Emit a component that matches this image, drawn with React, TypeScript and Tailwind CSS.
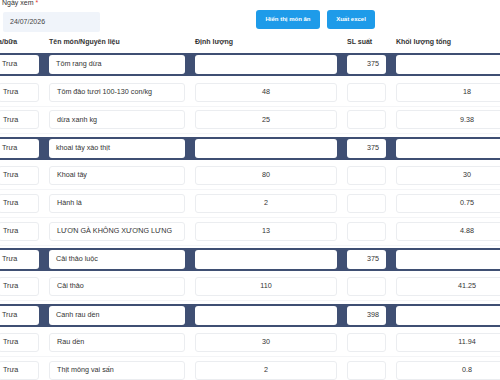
import React from "react";

type Row = { dark?: boolean; name: string; dl?: string; sl?: string; kl?: string };

const rows: Row[] = [
  { dark: true, name: "Tôm rang dừa", sl: "375" },
  { name: "Tôm đảo tươi 100-130 con/kg", dl: "48", kl: "18" },
  { name: "dừa xanh kg", dl: "25", kl: "9.38" },
  { dark: true, name: "khoai tây xào thịt", sl: "375" },
  { name: "Khoai tây", dl: "80", kl: "30" },
  { name: "Hành lá", dl: "2", kl: "0.75" },
  { name: "LƯƠN GÀ KHÔNG XƯƠNG LƯNG", dl: "13", kl: "4.88" },
  { dark: true, name: "Cải thảo luộc", sl: "375" },
  { name: "Cải thảo", dl: "110", kl: "41.25" },
  { dark: true, name: "Canh rau dền", sl: "398" },
  { name: "Rau dền", dl: "30", kl: "11.94" },
  { name: "Thịt mông vai sấn", dl: "2", kl: "0.8" },
];

const grid = "grid grid-cols-[41px_136px_142px_39px_142px] gap-x-[10px]";

function Box({ dark, children, align }: { dark?: boolean; children?: React.ReactNode; align: "left" | "center" | "right" }) {
  const al = align === "left" ? "justify-start pl-[7px]" : align === "center" ? "justify-center" : "justify-end pr-[7px]";
  return (
    <div
      className={`h-[19px] rounded-[3px] flex items-center bg-white text-[7.2px] text-[#333] whitespace-nowrap overflow-hidden ${al} ${
        dark ? "" : "border border-[#ebedf0]"
      }`}
    >
      {children}
    </div>
  );
}

export default function App() {
  return (
    <div
      className="w-[500px] h-[380px] overflow-hidden bg-white relative"
      style={{ fontFamily: '"Liberation Sans", Arial, sans-serif' }}
    >
      <div className="ml-[-2px] w-[560px]">
        <div className="pl-[4px] mt-[-3px] h-[12px] text-[7px] text-[#333] leading-[12px] whitespace-nowrap">
          Ngày xem <span className="text-[#e53935]">*</span>
        </div>
        <div className="flex items-start h-[25px]">
          <div className="ml-[5px] mt-[3px] w-[97px] h-[20px] bg-[#f0f4fa] rounded-[2px] flex items-center pl-[7px] text-[7px] text-[#444]">
            24/07/2026
          </div>
          <div className="ml-[156px] mt-[1px] flex gap-[7px]">
            <div className="w-[64px] h-[19px] rounded-[3px] bg-[#1e9be9] text-white text-[6px] font-bold flex items-center justify-center whitespace-nowrap">
              Hiển thị món ăn
            </div>
            <div className="w-[48px] h-[19px] rounded-[3px] bg-[#1e9be9] text-white text-[6px] font-bold flex items-center justify-center whitespace-nowrap">
              Xuất excel
            </div>
          </div>
        </div>
        <div className={`${grid} h-[17px] items-center text-[7px] font-bold text-[#333] whitespace-nowrap`}>
          <div className="ml-[-5px]">Ca/bữa</div>
          <div>Tên món/Nguyên liệu</div>
          <div>Định lượng</div>
          <div>SL suất</div>
          <div>Khối lượng tổng</div>
        </div>
        {rows.map((r, i) => (
          <div
            key={i}
            className={`h-[27.8px] flex items-center ${r.dark ? "" : "border-b border-[#f4f5f7]"}`}
          >
            <div className={`w-full ${r.dark ? "bg-[#3f4f73] h-[23px] flex items-center" : ""}`}>
              <div className={`${grid} w-full`}>
                <Box dark={r.dark} align="left">
                  <span className="ml-[-3px]">Trưa</span>
                </Box>
                <Box dark={r.dark} align="left">
                  {r.name}
                </Box>
                <Box dark={r.dark} align="center">
                  {r.dl}
                </Box>
                <Box dark={r.dark} align="right">
                  {r.sl}
                </Box>
                <Box dark={r.dark} align="center">
                  {r.kl}
                </Box>
              </div>
            </div>
          </div>
        ))}
      </div>
    </div>
  );
}
